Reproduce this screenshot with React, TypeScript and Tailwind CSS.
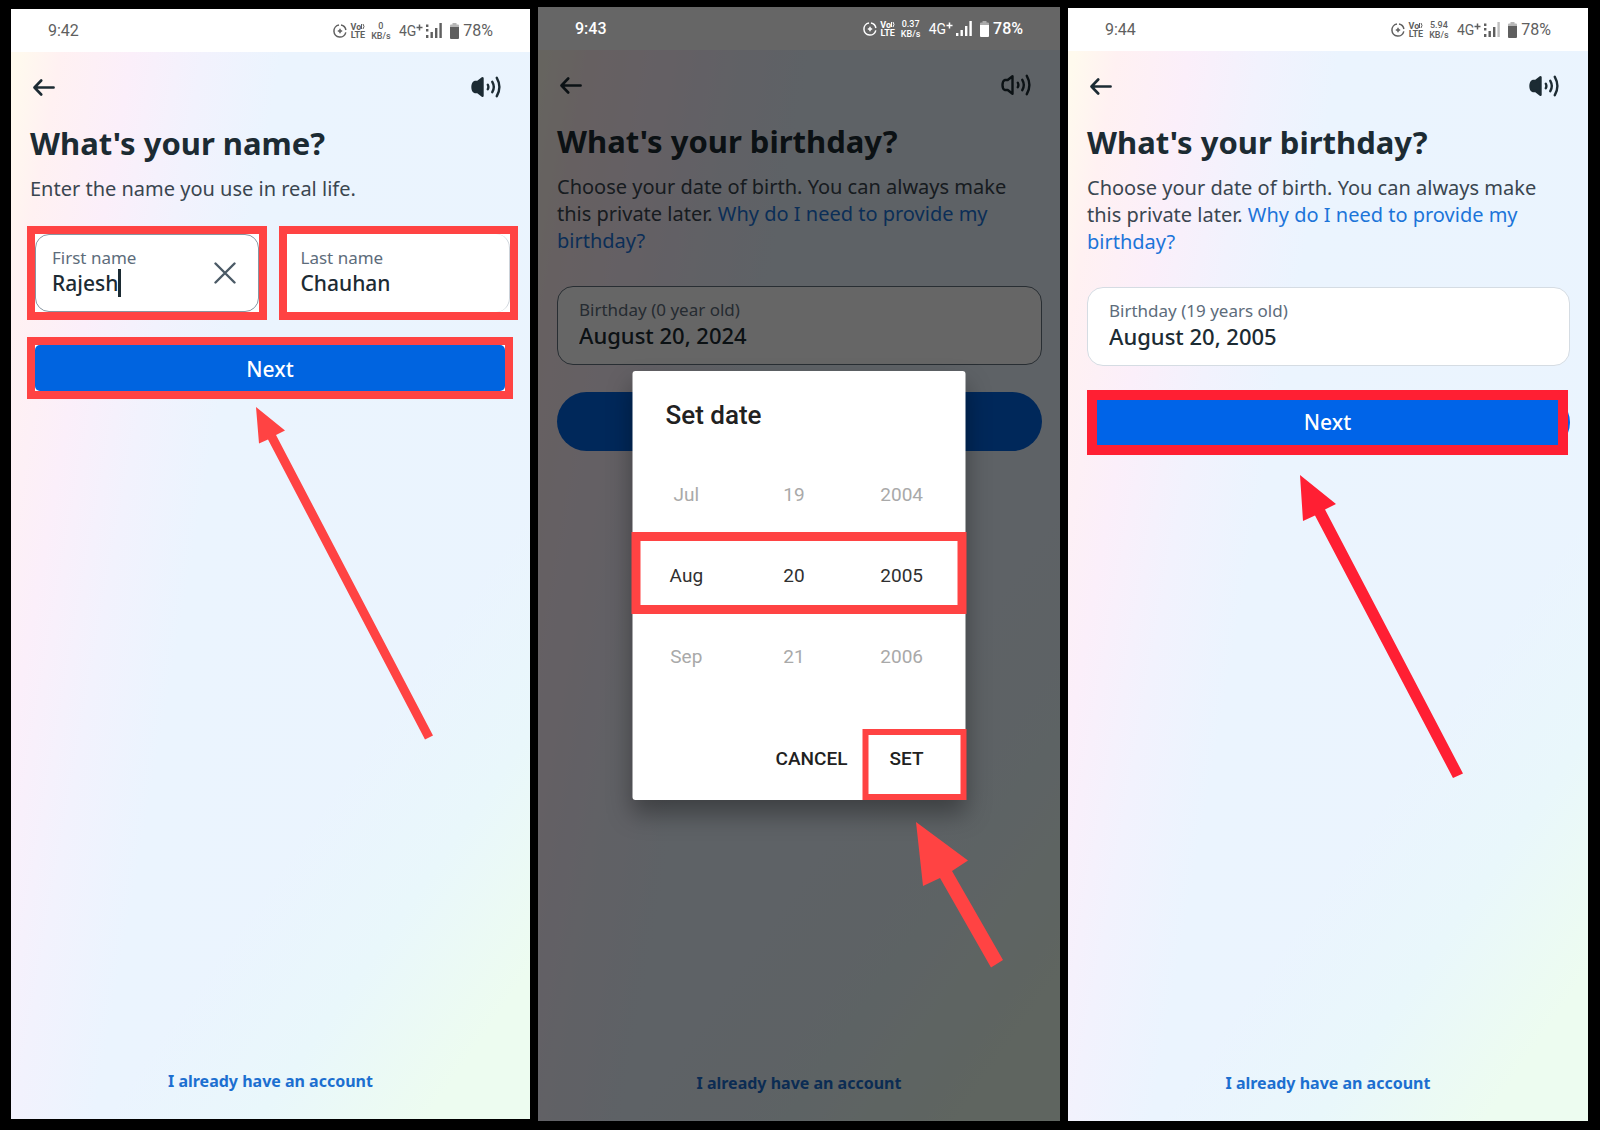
import { useState } from 'react';
import type { ReactNode } from 'react';

const appFont = "font-['Noto_Sans','Open_Sans',sans-serif]";

type StatusProps = { time: string; speed: string; dimmed?: boolean; signal: 'full' | 'weak' };

function StatusBar({ time, speed, dimmed, signal }: StatusProps) {
    return (
        <div
            className={
                "relative z-20 flex h-[43px] shrink-0 items-center justify-between pl-[37px] pr-[37px] font-[Roboto,sans-serif] text-base " +
                (dimmed ? 'bg-[#666666] font-medium text-white' : 'bg-white text-[#5f5f5f]')
            }
        >
            <span>{time}</span>
            <div className="flex items-center">
                {/* data saver */}
                <svg width="14" height="14" viewBox="0 0 14 14" fill="none" stroke="currentColor" strokeWidth="1.5">
                    <path d="M8 1.1A6 6 0 0 1 12.9 6M12.8 8.3A6 6 0 1 1 6 1.1M7 4.8v4.4M4.8 7h4.4" />
                </svg>
                <div className="ml-1 flex w-[14px] flex-col items-center text-[9px] leading-[8px] font-bold">
                    <span className="flex items-center">
                        Vo
                        <svg width="4" height="7" viewBox="0 0 4 7" fill="none" stroke="currentColor">
                            <path d="M.5 1v5M2 1q2 2.5 0 5" />
                        </svg>
                    </span>
                    <span>LTE</span>
                </div>
                <div className="ml-[6px] flex w-5 flex-col items-center text-[9px] leading-[10px] font-medium">
                    <span>{speed}</span>
                    <span>KB/s</span>
                </div>
                <span className="ml-2 flex items-start text-[14px] leading-4 font-normal">
                    4G
                    <svg className="mt-px" width="7" height="7" viewBox="0 0 7 7" stroke="currentColor" strokeWidth="1.5">
                        <path d="M3.5.5v6M.5 3.5h6" />
                    </svg>
                </span>
                <svg className="ml-[3px]" width="16" height="15" viewBox="0 0 16 15" fill="currentColor">
                    {dimmed ? (
                        <rect x="0" y="12" width="2.4" height="3" />
                    ) : (
                        <path d="M0 1.5h2.4v2.6H0zM0 6h2.4v2.6H0zM0 12h2.4v3H0z" />
                    )}
                    <rect x="4.5" y="9" width="2.4" height="6" />
                    <rect x="9" y="5" width="2.4" height="10" />
                    <rect x="13.4" y="0" width="2.4" height="15" opacity={signal === 'weak' ? 0.4 : 1} />
                </svg>
                <svg className="ml-2" width="9" height="16" viewBox="0 0 9 16" fill="currentColor">
                    <path d="M2.5 0h4v1.5H8q1 0 1 1V5H0V2.5q0-1 1-1h1.5z" opacity=".45" />
                    <path d="M0 4h9v11q0 1-1 1H1q-1 0-1-1z" />
                </svg>
                <span className="ml-1">78%</span>
            </div>
        </div>
    );
}

function Speaker({ outline }: { outline?: boolean }) {
    return (
        <svg width="30" height="22" viewBox="0 0 30 22" fill="none" stroke="currentColor" strokeWidth="2.4" strokeLinecap="round" strokeLinejoin="round">
            <path
                d="M11.5 2.2v17.6L6.7 16H3.8Q1.5 15 1.5 11t2.3-5h2.9z"
                fill={outline ? 'none' : 'currentColor'}
            />
            <path d="M16.8 8.8q1.2 2.2 0 4.4M21.3 5.8q3 5.2 0 10.4M25.8 1.8q5.2 9.2 0 18.4" />
        </svg>
    );
}

type PhoneProps = StatusProps & {
    title: string;
    className?: string;
    children: ReactNode;
    overlay?: ReactNode;
};

function Phone({ title, className = '', children, overlay, ...status }: PhoneProps) {
    return (
        <section
            className={
                'relative flex flex-col bg-[linear-gradient(125deg,transparent_67%,#e9f7fb_79%,#edfcf0_92%),linear-gradient(100deg,#fffaee_2%,#fff1f2_8%,#fbeffa_18%,#f2f2fd_28%,#ebf4fe_39%,#eaf4fe_100%)] text-[#1c2b33] ' +
                className
            }
        >
            <StatusBar {...status} />
            <div className="flex h-[70px] shrink-0 items-center justify-between pl-[22px] pr-[29px]">
                <button type="button" aria-label="Back">
                    <svg width="22" height="17" viewBox="0 0 22 17" fill="none" stroke="currentColor" strokeWidth="2.6" strokeLinecap="round" strokeLinejoin="round">
                        <path d="M8.2 1.5 1.5 8.5l6.7 7M1.8 8.5h18.8" />
                    </svg>
                </button>
                <button type="button" aria-label="Read aloud">
                    <Speaker outline={status.dimmed} />
                </button>
            </div>
            <div className="flex flex-1 flex-col">
                <h1 className="mt-[3px] pl-[19px] text-[31px] leading-9 font-bold">{title}</h1>
                {children}
            </div>
            <a href="#login" className="mb-[26px] self-center text-base leading-6 font-bold text-[#1c6fd0]">
                I already have an account
            </a>
            {overlay}
        </section>
    );
}

function BirthdayIntro() {
    return (
        <p className="mt-[14px] pr-[30px] pl-[19px] text-[20px] leading-[27px] text-[#3a4650]">
            Choose your date of birth. You can always make this private later.{' '}
            <a href="#why" className="text-[#1c74d9]">Why do I need to provide my birthday?</a>
        </p>
    );
}

function BirthdayField({ id, label, value, border }: { id: string; label: string; value: string; border: string }) {
    return (
        <div className={'mt-8 mr-[18px] ml-[19px] flex h-[79px] flex-col justify-center rounded-2xl border bg-white pb-[3px] pl-[21px] ' + border}>
            <label htmlFor={id} className="text-[17px] leading-[22px] text-[#5d6c7b]">{label}</label>
            <input id={id} readOnly value={value} className="h-7 w-full bg-transparent text-[22px] leading-7 font-medium outline-none" />
        </div>
    );
}

function Picker({ id, label, options }: { id: string; label: string; options: string[] }) {
    return (
        <div role="listbox" id={id} aria-label={label} className="text-center">
            {options.map((option, i) => (
                <div
                    key={option}
                    role="option"
                    aria-selected={i === 1}
                    className={'h-[81px] leading-[81px] ' + (i === 1 ? 'text-[#303030]' : 'text-[#a9a9a9]')}
                >
                    {option}
                </div>
            ))}
        </div>
    );
}

function DateDialog() {
    return (
        <div className="absolute inset-0 z-10 bg-black/60">
            <div
                role="dialog"
                aria-labelledby="set-date"
                className="absolute top-[364px] left-1/2 w-[333px] -translate-x-1/2 rounded-[3px] bg-white font-[Roboto,sans-serif] text-[19px] text-[#212121] shadow-[0_14px_24px_rgba(0,0,0,0.35)]"
            >
                <h2 id="set-date" className="h-[83px] pt-7 pl-[33px] text-[26px] leading-8 font-medium">Set date</h2>
                <div className="relative grid grid-cols-3 pr-[10px]">
                    <Picker id="month" label="Month" options={['Jul', 'Aug', 'Sep']} />
                    <Picker id="day" label="Day" options={['19', '20', '21']} />
                    <Picker id="year" label="Year" options={['2004', '2005', '2006']} />
                    <div className="absolute top-[78px] -right-px -left-px h-[82px] border-[9px] border-[#ff4343]" />
                </div>
                <div className="mt-8 flex justify-end font-medium">
                    <button type="button" className="mr-[15px] pb-[10px]">CANCEL</button>
                    <button type="button" className="-mr-px h-[71px] w-[104px] border-[6px] border-[#ff4343] pr-4 pb-[10px]">SET</button>
                </div>
            </div>
        </div>
    );
}

export default function App() {
    const [firstName, setFirstName] = useState('Rajesh');
    const [lastName, setLastName] = useState('Chauhan');

    return (
        <div className={'grid min-h-screen grid-cols-[519fr_522fr_520fr] gap-2 bg-black pt-[7px] pr-3 pb-[9px] pl-[11px] ' + appFont}>
            {/* Step 1: name */}
            <Phone
                title="What's your name?"
                time="9:42"
                speed="0"
                signal="full"
                className="mt-[2px] mb-[2px]"
                overlay={
                    <svg className="pointer-events-none absolute top-[398px] left-[245px]" width="178" height="333" viewBox="0 0 178 333" fill="#ff4343">
                        <path d="M0 0 29 23.5 20 28 177 328.5 169 332.5 12 32.5 3 36.5z" />
                    </svg>
                }
            >
                <p className="mt-[14px] pl-[19px] text-[20px] leading-[27px] text-[#3a4650]">Enter the name you use in real life.</p>
                <div className="mt-6 grid grid-cols-2 gap-3 pr-3 pl-4">
                    <div className="border-8 border-[#ff4343] bg-white">
                        <div className="flex h-[78px] items-center justify-between rounded-[14px] border border-[#8795a1] bg-white pr-[22px] pl-4">
                            <div className="pb-[3px]">
                                <label htmlFor="first-name" className="block text-[17px] leading-[22px] text-[#5d6c7b]">First name</label>
                                <div className="flex h-7 items-center">
                                    <input
                                        id="first-name"
                                        value={firstName}
                                        onChange={(e) => setFirstName(e.target.value)}
                                        className="h-7 [field-sizing:content] bg-transparent text-[21px] leading-7 font-medium outline-none"
                                    />
                                    <span className="h-7 w-[3px] shrink-0 bg-[#1c2b33]" />
                                </div>
                            </div>
                            <button type="button" aria-label="Clear" onClick={() => setFirstName('')}>
                                <svg width="22" height="22" viewBox="0 0 22 22" stroke="#4b5a66" strokeWidth="2.4" strokeLinecap="round">
                                    <path d="m1.5 1.5 19 19M20.5 1.5l-19 19" />
                                </svg>
                            </button>
                        </div>
                    </div>
                    <div className="border-8 border-[#ff4343] bg-white">
                        <div className="flex h-[78px] flex-col justify-center rounded-r-[14px] border-r border-[#cbd2d9] bg-white pb-[3px] pl-[14px]">
                            <label htmlFor="last-name" className="text-[17px] leading-[22px] text-[#5d6c7b]">Last name</label>
                            <input
                                id="last-name"
                                value={lastName}
                                onChange={(e) => setLastName(e.target.value)}
                                className="h-7 w-full bg-transparent text-[21px] leading-7 font-medium outline-none"
                            />
                        </div>
                    </div>
                </div>
                <div className="mt-[17px] mr-[17px] ml-4 flex border-8 border-[#ff4343] bg-white">
                    <button type="button" className="h-[46px] flex-1 rounded-[5px] bg-[#0064e0] pt-[3px] text-[21px] font-medium text-white">Next</button>
                </div>
            </Phone>

            {/* Step 2: date picker */}
            <Phone
                title="What's your birthday?"
                time="9:43"
                speed="0.37"
                signal="full"
                dimmed
                overlay={
                    <>
                        <DateDialog />
                        <svg className="pointer-events-none absolute top-[815px] left-[378px] z-20" width="88" height="146" viewBox="0 0 88 146" fill="#ff4343">
                            <path d="M0 0 52 38.5 36 49 87 138 75 145.5 24 56 7 64z" />
                        </svg>
                    </>
                }
            >
                <BirthdayIntro />
                <BirthdayField id="birthday-new" label="Birthday (0 year old)" value="August 20, 2024" border="border-[#65737f]" />
                <button type="button" aria-label="Next" className="mt-[27px] mr-[18px] ml-[19px] h-[59px] rounded-full bg-[#0064e0]" />
            </Phone>

            {/* Step 3: confirm birthday */}
            <Phone
                title="What's your birthday?"
                time="9:44"
                speed="5.94"
                signal="weak"
                className="mt-px"
                overlay={
                    <svg className="pointer-events-none absolute top-[467px] left-[232px]" width="164" height="304" viewBox="0 0 164 304" fill="#ff1f33">
                        <path d="M0 0 36 29 25 34.5 163 298.5 153 303 15 40.5 3 46z" />
                    </svg>
                }
            >
                <BirthdayIntro />
                <BirthdayField id="birthday-set" label="Birthday (19 years old)" value="August 20, 2005" border="border-[#d5dce3]" />
                <button type="button" className="relative mt-[27px] mr-[18px] ml-[19px] h-[59px] rounded-full bg-[#0064e8] text-[21px] font-medium text-white">
                    <span className="absolute -top-[3px] right-[2px] -bottom-[3px] left-0 flex items-center justify-center border-[10px] border-[#ff1f33] bg-[#0064e8]">
                        Next
                    </span>
                </button>
            </Phone>
        </div>
    );
}
